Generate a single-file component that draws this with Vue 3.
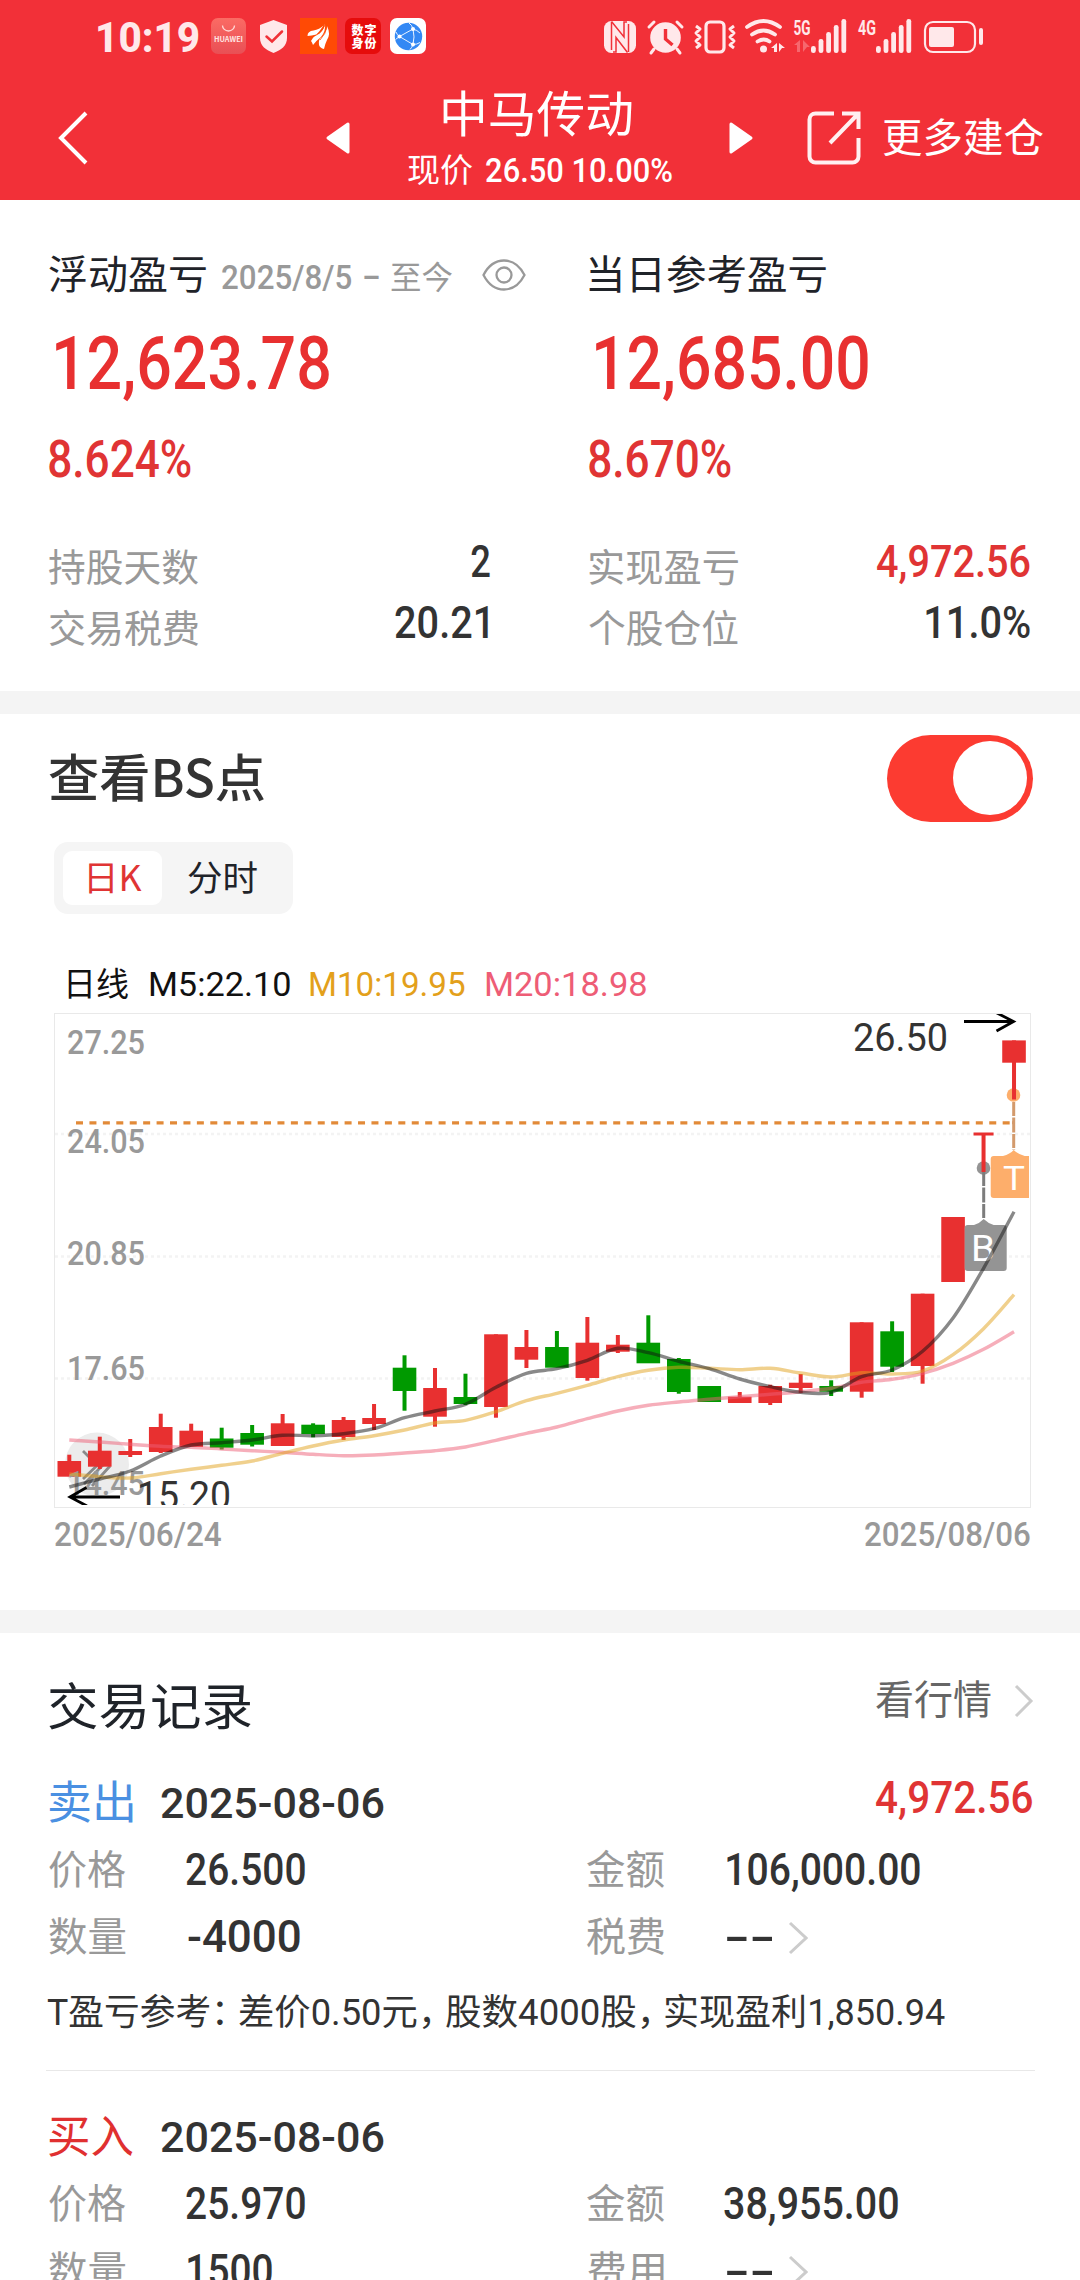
<script setup>
// v-ink="width": squeezes a text run so that its visible glyphs span the given width
const ctx = document.createElement('canvas').getContext('2d')
const vInk = {
  mounted(el, { value }) {
    const cs = getComputedStyle(el)
    ctx.font = `${cs.fontWeight} ${cs.fontSize} ${cs.fontFamily}`
    const m = ctx.measureText(el.textContent.trim())
    const scale = value / (m.actualBoundingBoxRight + m.actualBoundingBoxLeft)
    el.style.width = `${value}px`
    el.style.transform = `translateX(${m.actualBoundingBoxLeft * scale}px) scaleX(${scale})`
  },
}

const summary = [
  {
    title: '浮动盈亏', tw: 157, range: true,
    big: '12,623.78', bw: 273, pct: '8.624%',
    rows: [
      { label: '持股天数', value: '2', w: 19 },
      { label: '交易税费', value: '20.21', w: 93, end: 2 },
    ],
  },
  {
    title: '当日参考盈亏', tw: 237,
    big: '12,685.00', bw: 272, pct: '8.670%',
    rows: [
      { label: '实现盈亏', value: '4,972.56', w: 153, red: true },
      { label: '个股仓位', value: '11.0%', w: 104 },
    ],
  },
]

// [up, body top, body bottom, wick top, wick bottom]
const candles = [
  [1, 1461, 1476.7, 1454.7, 1476], [1, 1450.7, 1466.7, 1436.7, 1469], [1, 1451, 1455, 1439, 1457],
  [1, 1427, 1452, 1413.7, 1453], [1, 1430.7, 1447, 1423.7, 1447], [0, 1438.5, 1447.7, 1427.7, 1449.5],
  [0, 1433, 1444.7, 1425, 1446.5], [1, 1423.3, 1446, 1414, 1446], [0, 1424.7, 1434, 1423.3, 1437.3],
  [1, 1420, 1437, 1417, 1440], [1, 1418, 1424, 1404, 1430], [0, 1367.7, 1391, 1355.3, 1410.7],
  [1, 1388, 1416.7, 1368, 1426.7], [0, 1397, 1404, 1373.7, 1405], [1, 1334.3, 1407, 1334.3, 1417.7],
  [1, 1347, 1359.7, 1330, 1368], [0, 1347, 1367.7, 1331, 1367], [1, 1342.7, 1378, 1317, 1380.7],
  [1, 1344.7, 1351.7, 1335, 1353], [0, 1342.7, 1363.3, 1315.3, 1363], [0, 1359, 1392, 1358, 1393.7],
  [0, 1386, 1402, 1386, 1402], [1, 1396.7, 1403, 1392, 1403], [1, 1386, 1403, 1384.7, 1405],
  [1, 1382.7, 1388, 1374, 1393], [0, 1386, 1391.7, 1380.3, 1396], [1, 1322.3, 1391.7, 1322.3, 1397.7],
  [0, 1331.3, 1366.7, 1321.3, 1372], [1, 1293.7, 1366, 1293.7, 1383.7], [1, 1217, 1282, 1217, 1282],
  [1, 1132.5, 1135.5, 1134, 1172], [1, 1040.4, 1062.7, 1040.4, 1099.5],
]
const cx = (i) => 69.3 + i * 30.475

const ma5 = [1487, 1479, 1471, 1456, 1445, 1442.7, 1440, 1435.3, 1435.7, 1433.7, 1428.7, 1417.7, 1411, 1404.3, 1387.3, 1373.3, 1368.7, 1360.3, 1348.3, 1352.7, 1361.3, 1368.7, 1379, 1386.7, 1392.3, 1392.3, 1376.7, 1370, 1351.3, 1318, 1268.3, 1211.7]
const ma10 = [1474, 1476.7, 1478, 1473.7, 1469.3, 1465.3, 1461, 1453.3, 1446, 1440, 1435.7, 1430, 1423, 1420.3, 1411.7, 1400.7, 1393.3, 1385.3, 1376.7, 1370.3, 1367.3, 1368.3, 1369.7, 1368.3, 1373, 1377, 1372.7, 1374, 1371, 1354.7, 1328.7, 1294.7]
const ma20 = [1440, 1442, 1444.3, 1446.3, 1447.3, 1449, 1450.7, 1452.3, 1454.3, 1455.7, 1455, 1453, 1450.7, 1447, 1440.3, 1433.3, 1427, 1418.7, 1411, 1405.3, 1402, 1399.3, 1396.7, 1394.3, 1391.7, 1388.3, 1382.3, 1379.3, 1373.3, 1363.3, 1349.3, 1331.7]

// Catmull-Rom spline through the average values
function curve(ys) {
  const p = ys.map((y, i) => [cx(i), y])
  const at = (i) => p[Math.max(0, Math.min(p.length - 1, i))]
  let d = `M${p[0]}`
  for (let i = 0; i < p.length - 1; i++) {
    const [a, b, c, e] = [at(i - 1), at(i), at(i + 1), at(i + 2)]
    d += ` C${b[0] + (c[0] - a[0]) / 6},${b[1] + (c[1] - a[1]) / 6} ${c[0] - (e[0] - b[0]) / 6},${c[1] - (e[1] - b[1]) / 6} ${c}`
  }
  return d
}

const axis = [['27.25', 1054], ['24.05', 1153], ['20.85', 1265], ['17.65', 1380], ['14.45', 1495]]

const trades = [
  {
    side: '卖出', cls: 'sell', date: '2025-08-06', profit: '4,972.56',
    price: '26.500', pw: 119, amount: '106,000.00', aw: 193, ax: 3,
    qty: '-4000', qw: 112, fee: '税费',
    note: [['T盈亏参考：', 176], ['差价0.50元，', 191], ['股数4000股，', 203], ['实现盈利1,850.94', 280]],
  },
  {
    side: '买入', cls: 'buy', date: '2025-08-06', profit: '',
    price: '25.970', pw: 119, amount: '38,955.00', aw: 174, ax: 0,
    qty: '1500', qw: 84, fee: '费用', note: null,
  },
]
</script>

<template>
  <div class="page">
    <header class="head">
      <div class="status">
        <span v-ink="101" class="clock">10:19</span>
        <svg class="left-icons" width="217" height="40" viewBox="210 16 217 40">
          <defs>
            <linearGradient id="hw" x1="0" y1="0" x2="0" y2="1"><stop offset="0" stop-color="#fb6b64" /><stop offset="1" stop-color="#e94f55" /></linearGradient>
          </defs>
          <rect x="211" y="18" width="35" height="36" rx="7" fill="url(#hw)" />
          <path d="M222.500 25.500a6 5.500 0 0 0 12 0" fill="none" stroke="#ffd9d6" stroke-width="1.300" />
          <text x="214" y="41.500" textLength="29" lengthAdjust="spacingAndGlyphs" font-size="7" font-weight="700" fill="#ffe4e2">HUAWEI</text>
          <path d="M273.500 20l13.500 5v13c0 8-6 12-13.500 15c-7.500-3-13.500-7-13.500-15v-13z" fill="#ffe8ea" stroke-linejoin="round" />
          <path d="M266.500 36.500l5.500 5l10-10" fill="none" stroke="#f03037" stroke-width="2.500" stroke-linecap="round" />
          <rect x="300" y="18" width="37" height="36" fill="#ff4a05" />
          <path d="M307.500 36q0-5 6-5.500q6-1 10-5q-4 6-7 9q-5 1-9 1.500z M311 41q3-6 8-7q5-4 6-10q1 7-4 13q-4 3-8 8q-1-3-2-4z M319 45q-1-6 3-8q5-6 5-11q4 8 0 14q-2 4-3 9q-4-1-5-4z" fill="#fff" />
          <path d="M312 37q9-3 13-12 M320 40q6-6 7-14" fill="none" stroke="#ff4a05" stroke-width=".8" />
          <rect x="345" y="18" width="36" height="36" rx="7" fill="#e60c0c" />
          <text x="351.500" y="35" textLength="25" font-size="12" font-weight="900" fill="#fff">数字</text>
          <text x="351.500" y="48" textLength="25" font-size="12" font-weight="900" fill="#fff">身份</text>
          <rect x="390" y="18" width="36" height="36" rx="7" fill="#fff" />
          <circle cx="408.500" cy="36.500" r="13.700" fill="#3388f4" />
          <g fill="none" stroke="#fff" stroke-width=".9">
            <path d="M396 32q1 3 3.500 4.500L413 44.500q4 0 7-2M399.500 36.500L413 29q4 1 7 4M413 29q2 8 0 15.500M413 29q-1-4-4-6M413 44.500q-1 3-3 5M399.500 36.500l-4 3" />
          </g>
          <g fill="#fff"><circle cx="399.500" cy="36.500" r="2" /><circle cx="413" cy="29" r="2" /><circle cx="413" cy="44.500" r="2" /></g>
        </svg>
        <svg class="right-icons" width="384" height="40" viewBox="602 16 384 40">
          <g fill="#ffe8ea">
            <rect x="604" y="21" width="32" height="32" rx="7.500" />
            <path d="M611.500 22V50M628.500 24v28" fill="none" stroke="#f13038" stroke-width="1.500" />
            <path d="M611.500 21.500L624 37V22h3M627.500 52.500L616 37.500V52h-3" fill="none" stroke="#f13038" stroke-width="1.500" />
            <circle cx="665.500" cy="37.500" r="15.300" />
            <path d="M649 27l5-5M682 27l-5-5M654 49l-3 4M677 49l3 4" stroke="#ffe8ea" stroke-width="3" stroke-linecap="round" />
            <path d="M665.500 29v10l7 6" fill="none" stroke="#f13038" stroke-width="3.400" />
            <rect x="706" y="22" width="18" height="30" rx="4" fill="none" stroke="#ffe8ea" stroke-width="3.200" />
            <path d="M696 26l4 3l-4 4l4 4l-4 4l4 4l-4 3M734 26l-4 3l4 4l-4 4l4 4l-4 4l4 3" fill="none" stroke="#ffe8ea" stroke-width="3" stroke-linejoin="round" />
            <g fill="none" stroke="#ffe8ea" stroke-width="3.800" stroke-linecap="round">
              <path d="M747 27q16.500-12 33 0M752 34.500q11.500-8 23 0M757.500 41.500q6.500-4 12 0" />
            </g>
            <circle cx="763.500" cy="49" r="3.500" />
            <path d="M777 43v9h-3v-4h-3zM779 52v-9l6 5h-3z" />
            <text x="793.500" y="34.500" textLength="17" lengthAdjust="spacingAndGlyphs" font-size="21" font-weight="700">5G</text>
            <path d="M800 40v12h-3v-7h-3zM803 52V40l7 7h-3z" opacity=".3" />
            <text x="858" y="34.500" textLength="18" lengthAdjust="spacingAndGlyphs" font-size="21" font-weight="700">4G</text>
            <template v-for="x0 in [811, 876]" :key="x0">
              <rect v-for="(h, i) in [7, 14, 21, 28, 34]" :key="h" :x="x0 + i * 7.600" :y="53 - h" width="4.800" :height="h" rx="2.300" />
            </template>
            <rect x="925" y="22" width="50" height="30" rx="8" fill="none" stroke="#ffe8ea" stroke-width="2.200" />
            <rect x="929" y="27" width="25" height="20" rx="2" />
            <rect x="979" y="28" width="4" height="17" rx="2" />
          </g>
        </svg>
      </div>
      <nav class="nav">
        <svg class="back" width="30" height="54" viewBox="0 0 30 54"><path d="M28 2L3 27l25 25" fill="none" stroke="#fff" stroke-width="4" /></svg>
        <svg class="prev" width="24" height="32" viewBox="0 0 24 32"><path d="M22 2v28L2 16z" fill="#fff" stroke="#fff" stroke-width="3" stroke-linejoin="round" /></svg>
        <div class="titles">
          <span v-ink="189" class="stock">中马传动</span>
          <div class="quote">
            <span v-ink="64" class="q-label">现价</span>
            <span v-ink="186" class="num q-val">26.50 10.00%</span>
          </div>
        </div>
        <svg class="next" width="24" height="32" viewBox="0 0 24 32"><path d="M2 2v28l20-14z" fill="#fff" stroke="#fff" stroke-width="3" stroke-linejoin="round" /></svg>
        <svg class="share" width="54" height="54" viewBox="0 0 54 54" fill="none" stroke="#fff0f1" stroke-width="4">
          <path d="M27 2.500H8.500a6 6 0 0 0-6 6v37a6 6 0 0 0 6 6h37a6 6 0 0 0 6-6V27M35 2.500h16.500V18M51 3L23 32" />
        </svg>
        <span v-ink="160" class="more">更多建仓</span>
      </nav>
    </header>

    <section class="summary">
      <div v-for="(s, k) in summary" :key="s.title" :class="['col', k ? 'col-b' : 'col-a']">
        <div class="s-title">
          <span v-ink="s.tw" class="s-name">{{ s.title }}</span>
          <template v-if="s.range">
            <span v-ink="129" class="num s-date">2025/8/5</span>
            <span v-ink="15" class="num s-date s-dash">–</span>
            <span v-ink="61" class="s-now">至今</span>
            <svg class="eye" width="44" height="32" viewBox="0 0 44 32" fill="none" stroke="#999" stroke-width="2.300"><path d="M1.500 16Q9 1.500 22 1.500T42.500 16Q35 30.500 22 30.500T1.500 16z" /><circle cx="22" cy="16" r="7.500" /></svg>
          </template>
        </div>
        <div class="s-big"><span v-ink="s.bw" class="num">{{ s.big }}</span></div>
        <div class="s-pct"><span v-ink="142" class="num">{{ s.pct }}</span></div>
        <div v-for="r in s.rows" :key="r.label" class="s-row">
          <span v-ink="149" class="s-label">{{ r.label }}</span>
          <span v-ink="r.w" :class="['num', 's-val', { red: r.red, inset: r.end }]">{{ r.value }}</span>
        </div>
      </div>
    </section>
    <div class="band"></div>

    <section class="bs">
      <div class="bs-head">
        <span v-ink="215" class="bs-title">查看BS点</span>
        <span class="toggle"><i></i></span>
      </div>
      <div class="tabs">
        <span class="tab on"><span v-ink="53">日K</span></span>
        <span class="tab"><span v-ink="69">分时</span></span>
      </div>
      <div class="legend">
        <span v-ink="60">日线</span>
        <span v-ink="140" class="m5">M5:22.10</span>
        <span v-ink="155" class="m10">M10:19.95</span>
        <span v-ink="160" class="m20">M20:18.98</span>
      </div>
      <svg class="chart" width="978" height="495" viewBox="54 1013 978 495">
        <defs><clipPath id="plot"><rect x="55" y="1014" width="974" height="491" /></clipPath></defs>
        <rect x="54.500" y="1013.500" width="976" height="494" fill="none" stroke="#e9e9e9" />
        <path d="M55 1134H1030M55 1256.500H1030M55 1378.500H1030" stroke="#f3f3f3" stroke-width="2.500" stroke-dasharray="3 3" />
        <circle cx="97" cy="1464.500" r="32" fill="#ececec" />
        <path d="M83 1451l9 9M83 1479l27-26M84 1484l26-26M92 1486l18-20" stroke="#8a8a8a" stroke-width="2.800" />
        <path d="M76 1122.800H1012" stroke="#e28a38" stroke-width="3.300" stroke-dasharray="7 6.430" />
        <circle cx="983.500" cy="1168" r="6.800" fill="#949494" />
        <circle cx="1013.500" cy="1095" r="6.800" fill="#fdae6b" />
        <g clip-path="url(#plot)">
          <g v-for="(c, i) in candles" :key="i" :fill="c[0] ? '#e83030' : '#009a00'">
            <rect :x="cx(i) - 2" :y="c[3]" width="4" :height="c[4] - c[3]" />
            <rect :x="cx(i) - (i === 30 ? 10 : 11.800)" :y="c[1]" :width="i === 30 ? 20 : 23.600" :height="c[2] - c[1]" />
          </g>
          <path d="M983.700 1172v47" stroke="#7c7c7c" stroke-width="3" stroke-dasharray="14 1.500 15 1.500" />
          <path d="M1013.700 1102v48M1012 1122.800h2" stroke="#d39a6c" stroke-width="3" stroke-dasharray="14 1.500 15 1.500" />
          <path d="M968 1225h6q6-2 9.700-6q4 4 10 6h10q3 0 3 3v40q0 3-3 3h-36q-3 0-3-3v-40q0-3 3-3z" fill="#949494" />
          <path d="M994 1156h9q7-2 10.700-6q4 4 11 6h10v42h-41q-3 0-3-3v-36q0-3 3-3z" fill="#fdae6b" />
          <text x="971" y="1260.500" textLength="24" lengthAdjust="spacingAndGlyphs" font-size="37" fill="#fff">B</text>
          <text x="1003" y="1190" textLength="22" lengthAdjust="spacingAndGlyphs" font-size="34" fill="#fff">T</text>
        </g>
        <g font-weight="500" font-size="33.500" fill="#999">
          <text v-for="a in axis" :key="a[0]" x="67" :y="a[1]" textLength="78" lengthAdjust="spacingAndGlyphs">{{ a[0] }}</text>
        </g>
        <g fill="none" stroke-width="3.400">
          <path :d="curve(ma20)" stroke="#ee5d76" stroke-opacity=".5" />
          <path :d="curve(ma10)" stroke="#e2a21b" stroke-opacity=".5" />
          <path :d="curve(ma5)" stroke="#111" stroke-opacity=".5" />
        </g>
        <g clip-path="url(#plot)" font-size="39" fill="#333">
          <text x="853" y="1051" textLength="95" lengthAdjust="spacingAndGlyphs">26.50</text>
          <text x="137" y="1508.500" textLength="94" lengthAdjust="spacingAndGlyphs">15.20</text>
          <path d="M964 1021.500h49M996 1012.500l17.500 9l-17 9.500M120 1497H70M86.500 1487.500L70 1497l17 9" fill="none" stroke="#000" stroke-width="2.800" />
        </g>
      </svg>
      <div class="dates">
        <span v-ink="166" class="num">2025/06/24</span>
        <span v-ink="165" class="num">2025/08/06</span>
      </div>
    </section>
    <div class="band"></div>

    <section class="records">
      <div class="r-head">
        <span v-ink="202" class="r-title">交易记录</span>
        <span v-ink="115" class="r-link">看行情</span>
        <svg class="go" width="20" height="34" viewBox="0 0 20 34"><path d="M2 2l15 15L2 32" fill="none" stroke="#ccc" stroke-width="3" /></svg>
      </div>
      <article v-for="t in trades" :key="t.side" class="trade">
        <div class="t-head">
          <span v-ink="84" :class="['t-side', t.cls]">{{ t.side }}</span>
          <span v-ink="223" class="num t-date">{{ t.date }}</span>
          <span v-if="t.profit" v-ink="156" class="num t-profit">{{ t.profit }}</span>
        </div>
        <div class="t-row">
          <span class="cell a"><span v-ink="77" class="t-label">价格</span><span v-ink="t.pw" class="num">{{ t.price }}</span></span>
          <span class="cell b"><span v-ink="77" class="t-label">金额</span><span v-ink="t.aw" :class="['num', { nudge: t.ax }]">{{ t.amount }}</span></span>
        </div>
        <div class="t-row">
          <span class="cell a"><span v-ink="77" class="t-label">数量</span><span v-ink="t.qw" class="num qty">{{ t.qty }}</span></span>
          <span class="cell b"><span v-ink="77" class="t-label">{{ t.fee }}</span><span v-ink="46" class="num fee">--</span>
            <svg class="fee-go" width="20" height="34" viewBox="0 0 20 34"><path d="M2 2l16 15L2 32" fill="none" stroke="#ccc" stroke-width="3" /></svg>
          </span>
        </div>
        <p v-if="t.note" class="note"><span v-for="n in t.note" :key="n[0]" v-ink="n[1]">{{ n[0] }}</span></p>
      </article>
    </section>
  </div>
</template>

<style>
body { margin: 0; background: #fff; }
</style>

<style scoped>
.page { width: 1080px; height: 2280px; overflow: hidden; background: #fff; color: #333; font-family: Roboto, "Noto Sans CJK SC", sans-serif; line-height: 1; }
.page span { white-space: nowrap; }
span[style] { display: block; flex: none; transform-origin: left center; }
svg { display: block; flex: none; }
.num { font-family: Roboto, sans-serif; font-weight: 500; }

.head { height: 200px; background: #f23038; color: #fff; overflow: hidden; }
.status { display: flex; align-items: center; height: 72px; padding-left: 98px; }
.clock { font-size: 42px; font-weight: 800; color: #ffe8ea; padding-top: 4px; }
.left-icons { margin-left: 11px; font-family: "Noto Sans CJK SC", sans-serif; }
.right-icons { margin-left: 175px; }
.nav { display: flex; align-items: center; height: 128px; padding-left: 58px; }
.back { margin: 4px 238px 0 0; }
.prev { margin: 3px 58px 0 0; }
.titles { width: 264px; height: 128px; }
.stock { margin: 15px 0 0 35px; font-size: 49px; line-height: 48px; font-family: "Noto Sans CJK SC", sans-serif; }
.quote { display: flex; gap: 14px; align-items: center; height: 32px; margin-top: 19px; }
.q-label { font-size: 33px; }
.q-val { font-size: 34px; }
.next { margin: 3px 0 0 57px; }
.share { margin: 4px 0 0 54px; }
.more { margin: 6px 0 0 22px; font-size: 40px; }

.summary { display: flex; height: 491px; padding-left: 49px; box-sizing: border-box; }
.col { padding-top: 37px; }
.col-a { width: 441px; margin-right: 99px; }
.col-b { width: 441px; }
.s-title { display: flex; align-items: center; height: 70px; color: #1f2329; }
.s-name { margin-top: 8px; font-size: 40px; }
.s-date { margin: 9px 0 0 16px; font-size: 34px; color: #999; }
.s-dash { margin-left: 13px; }
.s-now { margin: 11px 0 0 12px; font-size: 32px; color: #999; }
.eye { margin: 6px 0 0 30px; }
.s-big { display: flex; align-items: center; height: 80px; margin: 17px 0 0 7px; font-size: 74.500px; color: #e83030; }
.s-pct { display: flex; align-items: center; height: 60px; margin: 25px 0 47px; font-size: 51px; color: #e03434; }
.s-row { display: flex; align-items: center; justify-content: space-between; height: 61px; }
.s-label { padding-top: 3px; font-size: 38px; color: #999; }
.s-val { font-size: 44px; padding-bottom: 9px; }
.s-val.red { color: #e03434; }
.inset { margin-right: 2px; }
.band { height: 23px; background: #f4f4f4; }

.bs { height: 896px; padding-left: 54px; box-sizing: border-box; }
.bs-head { display: flex; align-items: center; justify-content: space-between; height: 128px; padding: 0 47px 0 0; margin-left: -5px; }
.bs-title { padding-bottom: 6px; font-size: 51px; font-weight: 500; font-family: "Noto Sans CJK SC", sans-serif; }
.toggle { display: flex; align-items: center; justify-content: flex-end; width: 146px; height: 87px; padding-right: 6px; box-sizing: border-box; border-radius: 44px; background: #fc3b31; }
.toggle i { width: 74px; height: 74px; border-radius: 50%; background: #fff; }
.tabs { display: flex; align-items: center; width: 239px; height: 72px; padding: 9px; box-sizing: border-box; border-radius: 14px; background: #f5f5f5; }
.tab { display: flex; align-items: center; justify-content: center; width: 99px; height: 54px; padding-bottom: 5px; box-sizing: border-box; border-radius: 9px; font-size: 35px; color: #1f2329; font-family: "Noto Sans CJK SC", sans-serif; }
.tab + .tab { width: 121px; }
.tab.on { padding-left: 5px; background: #fff; color: #e03434; }
.legend { display: flex; align-items: center; height: 60px; margin: 40px 0 -1px 14px; font-size: 33px; color: #111; font-family: Roboto, "Noto Sans CJK SC", sans-serif; }
.m5 { margin-left: 22px; }
.m10 { margin-left: 20px; color: #e3a01b; }
.m20 { margin-left: 21px; color: #ee5d76; }
.chart { font-family: Roboto, sans-serif; }
.dates { display: flex; justify-content: space-between; align-items: center; width: 975px; height: 52px; padding-left: 1px; font-size: 33px; color: #999; }

.records { padding: 0 46px; }
.r-head { display: flex; align-items: center; height: 140px; padding-left: 3px; color: #1f2329; }
.r-title { padding-top: 9px; font-size: 50px; }
.r-link { margin: -4px 0 0 auto; font-size: 40px; color: #666; }
.go { margin: -4px 0 0 23px; }
.trade { padding-left: 3px; }
.trade + .trade { margin-top: 36px; }
.t-head { display: flex; align-items: center; height: 60px; padding-bottom: 4px; }
.t-side { font-size: 45px; }
.sell { color: #4a90e2; }
.buy { color: #e03030; }
.t-date { margin: 2px 0 0 28px; font-size: 42px; }
.t-profit { margin: -12px 2px 0 auto; font-size: 45px; color: #e03434; }
.t-row { display: flex; height: 67px; font-size: 43.500px; }
.cell { display: flex; align-items: center; }
.cell.a { width: 538px; }
.t-label { margin-right: 60px; font-size: 40px; color: #999; }
.nudge { margin-left: 3px; }
.qty { margin-left: 2px; }
.fee { margin-left: 2px; }
.fee-go { margin-left: 16px; }
.note { display: flex; align-items: center; gap: 16px; height: 99px; margin: 0 -1px 0 -3px; padding-left: 1px; font-size: 36px; border-bottom: 1px solid #e8e8e8; }
.note span { margin: -12px 0 4px; }
</style>
